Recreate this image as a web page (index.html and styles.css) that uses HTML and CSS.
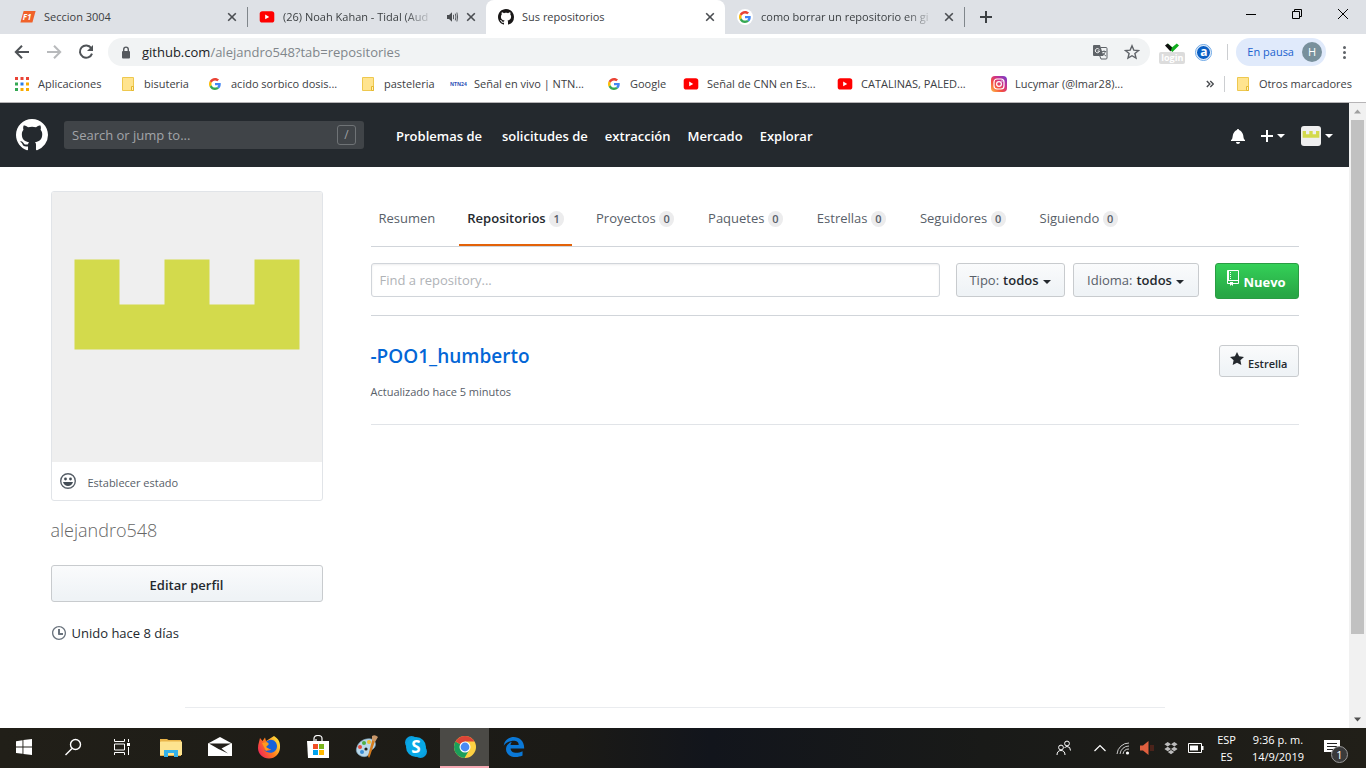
FILE: index.html
```html
<!DOCTYPE html>
<html lang="es">
<head>
<meta charset="utf-8">
<title>Sus repositorios</title>
<link rel="stylesheet" href="styles.css">
</head>
<body>
<svg class="sprite" aria-hidden="true">
  <symbol id="google" viewBox="0 0 48 48">
    <path fill="#ea4335" d="M24 9.5c3.54 0 6.71 1.22 9.21 3.6l6.85-6.85C35.9 2.38 30.47 0 24 0 14.62 0 6.51 5.38 2.56 13.22l7.98 6.19C12.43 13.72 17.74 9.5 24 9.5z"/>
    <path fill="#4285f4" d="M46.98 24.55c0-1.57-.15-3.09-.38-4.55H24v9.02h12.94c-.58 2.96-2.26 5.48-4.78 7.18l7.73 6c4.51-4.18 7.09-10.36 7.09-17.65z"/>
    <path fill="#fbbc05" d="M10.53 28.59c-.48-1.45-.76-2.99-.76-4.59s.27-3.14.76-4.59l-7.98-6.19C.92 16.46 0 20.12 0 24c0 3.88.92 7.54 2.56 10.78l7.97-6.19z"/>
    <path fill="#34a853" d="M24 48c6.48 0 11.93-2.13 15.89-5.81l-7.73-6c-2.15 1.45-4.92 2.3-8.16 2.3-6.26 0-11.57-4.22-13.47-9.91l-7.98 6.19C6.51 42.62 14.62 48 24 48z"/>
  </symbol>
  <symbol id="youtube" viewBox="0 0 16 16"><rect x="0.7" y="2.2" width="14.6" height="11.4" rx="2.6" fill="#f00"/><path d="M6.2 5.6v4.6L10.2 7.9z" fill="#fff"/></symbol>
  <symbol id="folder" viewBox="0 0 14 16"><path d="M1.5 1.5h11v9.5v3.5h-11z" fill="#ffe48f" stroke="#eec84f"/><path d="M10.5 14.5v-4h2v4z" fill="#fff0b8" stroke="#e5b930"/></symbol>
  <symbol id="github" viewBox="0 0 16 16"><path d="M8 0C3.58 0 0 3.58 0 8c0 3.54 2.29 6.53 5.47 7.59.4.07.55-.17.55-.38 0-.19-.01-.82-.01-1.49-2.01.37-2.53-.49-2.69-.94-.09-.23-.48-.94-.82-1.13-.28-.15-.68-.52-.01-.53.63-.01 1.08.58 1.23.82.72 1.21 1.87.87 2.33.66.07-.52.28-.87.51-1.07-1.78-.2-3.64-.89-3.64-3.95 0-.87.31-1.59.82-2.15-.08-.2-.36-1.02.08-2.12 0 0 .67-.21 2.2.82.64-.18 1.32-.27 2-.27.68 0 1.36.09 2 .27 1.53-1.04 2.2-.82 2.2-.82.44 1.1.16 1.92.08 2.12.51.56.82 1.27.82 2.15 0 3.07-1.87 3.75-3.65 3.95.29.25.54.73.54 1.48 0 1.07-.01 1.93-.01 2.2 0 .21.15.46.55.38A8.013 8.013 0 0016 8c0-4.42-3.58-8-8-8z" fill="currentColor"/></symbol>
  <symbol id="close" viewBox="0 0 10 10"><path d="M1.2 1.2l7.6 7.6M8.8 1.2L1.2 8.8" stroke="#4a4d51" stroke-width="1.6"/></symbol>
  <symbol id="crown" viewBox="0 0 420 420"><rect width="420" height="420" fill="#efefef"/><path d="M35 105h70v70h70v-70h70v70h70v-70h70v140H35z" fill="#d3da4c"/></symbol>
</svg>

<header class="browser">
  <div class="tab-strip">
    <div class="tab">
      <svg class="icon16" viewBox="0 0 16 16"><path d="M3.6 2h12L12.4 13.6H.4z" fill="#f0622a"/><text x="2.8" y="10.8" class="f1-mark">F1</text></svg>
      <span class="tab-title">Seccion 3004</span>
      <button class="tab-close" aria-label="Cerrar"><svg><use href="#close"/></svg></button>
    </div>
    <div class="tab tab-divided">
      <svg class="icon16"><use href="#youtube"/></svg>
      <span class="tab-title"><span class="fade">(26) Noah Kahan - Tidal (Aud</span></span>
      <svg class="speaker" viewBox="0 0 12 12"><path d="M1 4h2l3-2.8v9.6L3 8H1z" fill="#4a4d51"/><path d="M7.5 3.8v4.4M9.3 2.6q1.2 3.4 0 6.8M10.9 1.5q1.4 4.5 0 9" stroke="#4a4d51" fill="none" stroke-width=".9"/></svg>
      <button class="tab-close" aria-label="Cerrar"><svg><use href="#close"/></svg></button>
    </div>
    <div class="tab active">
      <svg class="icon16 dark"><use href="#github"/></svg>
      <span class="tab-title">Sus repositorios</span>
      <button class="tab-close" aria-label="Cerrar"><svg><use href="#close"/></svg></button>
    </div>
    <div class="tab">
      <span class="round"><svg><use href="#google"/></svg></span>
      <span class="tab-title"><span class="fade">como borrar un repositorio en gi</span></span>
      <button class="tab-close" aria-label="Cerrar"><svg><use href="#close"/></svg></button>
    </div>
    <button class="new-tab tab-divided" aria-label="Nueva pestaña"><svg viewBox="0 0 12 12"><path d="M6 0v12M0 6h12" stroke="#3c4043" stroke-width="2"/></svg></button>
    <div class="window-buttons">
      <button aria-label="Minimizar"><svg viewBox="0 0 12 12"><path d="M1 6.5h10" stroke="#000"/></svg></button>
      <button aria-label="Restaurar"><svg viewBox="0 0 12 12"><path d="M1.5 3.5h7v7h-7zM3.5 3.5v-2h7v7h-2" fill="none" stroke="#000"/></svg></button>
      <button aria-label="Cerrar ventana"><svg viewBox="0 0 12 12"><path d="M1 1l10 10M11 1L1 11" stroke="#000"/></svg></button>
    </div>
  </div>

  <div class="toolbar">
    <button aria-label="Atrás"><svg viewBox="0 0 16 16"><path d="M15 8H2.5M8 1.8L1.8 8 8 14.2" stroke="#4f5357" stroke-width="2" fill="none"/></svg></button>
    <button aria-label="Adelante"><svg viewBox="0 0 16 16"><path d="M1 8h12.5M8 1.8L14.2 8 8 14.2" stroke="#b8babc" stroke-width="2" fill="none"/></svg></button>
    <button aria-label="Recargar"><svg viewBox="0 0 16 16"><path d="M13.2 4A6.2 6.2 0 1 0 14 9.6" stroke="#4f5357" stroke-width="2" fill="none"/><path d="M15 1v6H9z" fill="#4f5357"/></svg></button>
    <div class="omnibox">
      <svg class="lock" viewBox="0 0 10 13"><rect x="1" y="5" width="8" height="7.5" rx="1" fill="#55595e"/><path d="M2.7 5.5V3.4a2.3 2.3 0 0 1 4.6 0v2.1" fill="none" stroke="#55595e" stroke-width="1.4"/></svg>
      <a class="url" href="#">github.com<span>/alejandro548?tab=repositories</span></a>
      <svg class="icon16" viewBox="0 0 16 16"><path d="M2 1h6l3.5 11H2a1 1 0 0 1-1-1V2a1 1 0 0 1 1-1z" fill="#5f6368"/><path d="M7.2 5.5A2.1 2.1 0 1 0 7.5 7H5.6" stroke="#fff" fill="none"/><path d="M8.5 3.5H14a1 1 0 0 1 1 1V14a1 1 0 0 1-1 1H9l-1.2-3" fill="none" stroke="#5f6368"/><path d="M9.8 7.5h4.4M12 6.3v1.2M13.4 7.5q-.5 2.5-3 4M11 9q1 2 3 3" stroke="#5f6368" fill="none" stroke-width=".9"/></svg>
      <svg class="icon16 star" viewBox="0 0 16 16"><path d="M8 1.8l1.8 4.3 4.7.4-3.6 3 1.1 4.6L8 11.7l-4 2.4 1.1-4.6-3.6-3 4.7-.4z" fill="none" stroke="#5f6368" stroke-width="1.4"/></svg>
    </div>
    <div class="extension"><svg viewBox="0 0 16 9"><path d="M2.2 3L4 .6l4.2 3.6L12.800 .5 15 2.600 8.400 9z" fill="#0fae1d"/><path d="M1 2.500L3.600 .5 8 4.400 6.500 8.500z" fill="#111"/></svg><span>login</span></div>
    <span class="ext-a">a</span>
    <button class="profile">En pausa <span>H</span></button>
    <button class="kebab" aria-label="Menú"><i></i><i></i><i></i></button>
  </div>

  <nav class="bookmarks">
    <a href="#"><svg class="icon16" viewBox="0 0 16 16"><path fill="#ea4335" d="M1 1h3v3H1zM6.500 1h3v3h-3zM12 1h3v3h-3z"/><path fill="#34a853" d="M1 6.500h3v3H1zM1 12h3v3H1z"/><path fill="#2a7de8" d="M6.500 6.500h3v3h-3z"/><path fill="#f9ab00" d="M12 6.500h3v3h-3zM6.500 12h3v3h-3zM12 12h3v3h-3z"/></svg>Aplicaciones</a>
    <a href="#"><svg class="icon16"><use href="#folder"/></svg>bisuteria</a>
    <a href="#"><svg class="icon16 g12"><use href="#google"/></svg>acido sorbico dosis...</a>
    <a href="#"><svg class="icon16"><use href="#folder"/></svg>pasteleria</a>
    <a href="#"><span class="ntn">NTN24</span>Señal en vivo | NTN...</a>
    <a href="#"><svg class="icon16 g12"><use href="#google"/></svg>Google</a>
    <a href="#"><svg class="icon16"><use href="#youtube"/></svg>Señal de CNN en Es...</a>
    <a href="#"><svg class="icon16"><use href="#youtube"/></svg>CATALINAS, PALED...</a>
    <a href="#"><svg class="icon16" viewBox="0 0 16 16"><defs><linearGradient id="ig" x1="0" y1="1" x2="1" y2="0"><stop offset="0" stop-color="#fdc04a"/><stop offset=".35" stop-color="#f5503f"/><stop offset=".65" stop-color="#c8308f"/><stop offset="1" stop-color="#6a3fd0"/></linearGradient></defs><rect width="16" height="16" rx="4" fill="url(#ig)"/><rect x="3" y="3" width="10" height="10" rx="3" fill="none" stroke="#fff" stroke-width="1.200"/><circle cx="8" cy="8" r="2.400" fill="none" stroke="#fff" stroke-width="1.200"/><circle cx="11" cy="5" r=".7" fill="#fff"/></svg>Lucymar (@lmar28)...</a>
    <button class="more" aria-label="Más marcadores"><svg viewBox="0 0 8 8"><path d="M.8 1l3 3-3 3M4.300 1l3 3-3 3" stroke="#4a4d51" stroke-width="1.400" fill="none"/></svg></button>
    <a class="others" href="#"><svg class="icon16"><use href="#folder"/></svg>Otros marcadores</a>
  </nav>
</header>

<div class="viewport">
  <div class="page">
    <header class="gh-header">
      <a class="gh-logo" href="#" aria-label="GitHub"><svg><use href="#github"/></svg></a>
      <label class="gh-search"><input type="text" aria-label="Buscar" placeholder="Search or jump to..."><kbd>/</kbd></label>
      <nav class="gh-nav">
        <a class="issues" href="#">Problemas de</a>
        <a href="#">solicitudes de</a>
        <a href="#">extracción</a>
        <a href="#">Mercado</a>
        <a href="#">Explorar</a>
      </nav>
      <div class="gh-tools">
        <button aria-label="Notificaciones"><svg class="oct14" viewBox="0 0 14 16"><path fill="currentColor" d="M14 12v1H0v-1l.73-.58c.77-.77.81-2.550 1.190-4.420C2.690 3.230 6 2 6 2c0-.55.45-1 1-1s1 .45 1 1c0 0 3.390 1.230 4.160 5 .38 1.880.42 3.660 1.190 4.420l.66.58H14zm-7 4c1.110 0 2-.89 2-2H5c0 1.110.89 2 2 2z"/></svg></button>
        <button aria-label="Crear"><svg class="oct12" viewBox="0 0 12 16"><path fill="currentColor" d="M12 9H7v5H5V9H0V7h5V2h2v5h5v2z"/></svg><i class="caret"></i></button>
        <button aria-label="Cuenta"><svg class="mini-avatar"><use href="#crown"/></svg><i class="caret"></i></button>
      </div>
    </header>

    <div class="container">
      <aside class="sidebar">
        <div class="avatar-card">
          <svg class="avatar" viewBox="0 0 420 420"><use href="#crown"/></svg>
          <button class="status"><svg class="icon16" viewBox="0 0 16 16"><circle cx="8" cy="8" r="7.300" fill="none" stroke="#586069" stroke-width="1.400"/><circle cx="5.500" cy="6" r="1.400" fill="#444d56"/><circle cx="10.500" cy="6" r="1.400" fill="#444d56"/><path d="M3 9h10c-.8 2.700-2.600 4-5 4s-4.200-1.300-5-4z" fill="#444d56"/></svg><span>Establecer estado</span></button>
        </div>
        <h1 class="username">alejandro548</h1>
        <button class="btn edit">Editar perfil</button>
        <p class="joined"><svg class="oct14" viewBox="0 0 14 16"><path fill="#6a737d" d="M8 8h3v2H7c-.55 0-1-.45-1-1V4h2v4zM7 2.300c3.140 0 5.700 2.560 5.700 5.700s-2.560 5.700-5.700 5.700A5.710 5.710 0 011.300 8c0-3.140 2.560-5.700 5.700-5.700zM7 1C3.140 1 0 4.140 0 8s3.140 7 7 7 7-3.140 7-7-3.140-7-7-7z"/></svg>Unido hace 8 días</p>
      </aside>

      <main class="main">
        <nav class="subnav">
          <a href="#">Resumen</a>
          <a class="selected" href="#">Repositorios <span>1</span></a>
          <a href="#">Proyectos <span>0</span></a>
          <a href="#">Paquetes <span>0</span></a>
          <a href="#">Estrellas <span>0</span></a>
          <a href="#">Seguidores <span>0</span></a>
          <a href="#">Siguiendo <span>0</span></a>
        </nav>
        <form class="filters">
          <input type="search" aria-label="Buscar repositorio" placeholder="Find a repository...">
          <button type="button" class="btn type"><span>Tipo:</span> todos<i class="caret"></i></button>
          <button type="button" class="btn lang"><span>Idioma:</span> todos<i class="caret"></i></button>
          <button type="button" class="btn primary"><svg class="oct12" viewBox="0 0 12 16"><path fill="currentColor" d="M4 9H3V8h1v1zm0-3H3v1h1V6zm0-2H3v1h1V4zm0-2H3v1h1V2zm8-1v12c0 .55-.45 1-1 1H6v2l-1.500-1.500L3 16v-2H1c-.55 0-1-.45-1-1V1c0-.55.45-1 1-1h10c.55 0 1 .45 1 1zm-1 10H1v2h2v-1h3v1h5v-2zm0-10H2v9h9V1z"/></svg><span>Nuevo</span></button>
        </form>
        <article class="repo">
          <div>
            <h3><a href="#">-POO1_humberto</a></h3>
            <p>Actualizado hace 5 minutos</p>
          </div>
          <button class="btn star-btn"><svg class="oct14" viewBox="0 0 14 16"><path fill="currentColor" d="M14 6l-4.900-.64L7 1 4.900 5.360 0 6l3.600 3.260L2.670 14 7 11.670 11.330 14l-.93-4.740L14 6z"/></svg><span>Estrella</span></button>
        </article>
      </main>
    </div>
    <footer class="page-footer"></footer>
  </div>
  <div class="scrollbar" aria-hidden="true">
    <svg viewBox="0 0 17 17"><path d="M5 10.500h7L8.500 6.500z" fill="#a0a0a0"/></svg>
    <div class="thumb"></div>
    <div class="rest"></div>
    <svg viewBox="0 0 17 17"><path d="M5 6.500h7L8.500 10.500z" fill="#505050"/></svg>
  </div>
</div>

<footer class="taskbar">
  <div class="apps">
    <button aria-label="Inicio"><svg viewBox="0 0 24 24"><path fill="#fff" d="M4 6.300l6.500-1v6.300H4zM11.400 5.100L20 4v7.600h-8.600zM4 12.500h6.500v6.300L4 17.900zM11.400 12.500H20V20l-8.600-1.100z"/></svg></button>
    <button aria-label="Buscar"><svg viewBox="0 0 24 24"><circle cx="14.500" cy="9.500" r="5" fill="none" stroke="#fff" stroke-width="1.400"/><path d="M11 13.500L4.500 20" stroke="#fff" stroke-width="1.500"/></svg></button>
    <button aria-label="Vista de tareas"><svg viewBox="0 0 24 24"><path d="M4.500 4v2.500h10V4M4.500 20v-2.500h10V20M4.500 9v6h10V9zM18.500 4v3M18.500 12v8" stroke="#fff" fill="none"/><path d="M17 8h3v3h-3z" fill="#fff"/></svg></button>
    <button aria-label="Explorador"><svg viewBox="0 0 24 24"><path d="M1 4h7l1.500 1H22v16H1z" fill="#e9b449"/><path d="M2 6.500h21V20H1V7z" fill="#fde38f"/><path d="M5 22v-7h14v7h-4v-4H9v4z" fill="#34b1e8"/></svg></button>
    <button aria-label="Correo"><svg viewBox="0 0 24 24"><path d="M0 8.500L12 2l12 6.500V21H0z" fill="#fff"/><path d="M1 8.500h22l-9.500 5L20 18.500 10.500 14z" fill="#24211b"/></svg></button>
    <button aria-label="Firefox"><svg viewBox="0 0 24 24"><defs><linearGradient id="fx" x1="0" y1=".8" x2="1" y2=".2"><stop offset="0" stop-color="#f0205c"/><stop offset=".5" stop-color="#ff7b1c"/><stop offset="1" stop-color="#ffe83c"/></linearGradient></defs><path d="M2 7l1-4 2.500 3L8 2.500 9 6l8-5c5 3 6.500 7 6 12-.5 6-5 10.500-11 10.500S1 19 1 13c0-2 .3-4 1-6z" fill="url(#fx)"/><path d="M9 7c5-5 11-1 11 4 0 7-8 9-13 4 3 1 6 1 7-1-4 0-7-2-5-7z" fill="#1762d9"/><path d="M5 8l5-1 2 2-3 3 3 2-3 2z" fill="#ff9b1f"/></svg></button>
    <button aria-label="Tienda"><svg viewBox="0 0 24 24"><path d="M8 6V3.500C8 1.500 9.500.5 12 .5s4 1 4 3V6M10 6V4" fill="none" stroke="#fff" stroke-width="1.200"/><path d="M1 6h22v17H2z" fill="#fff"/><path d="M7 9h5v5H7z" fill="#f04e23"/><path d="M13 9h5v5h-5z" fill="#79b51c"/><path d="M7 15h5v5H7z" fill="#00a2ed"/><path d="M13 15h5v5h-5z" fill="#ffb800"/></svg></button>
    <button aria-label="Paint"><svg viewBox="0 0 24 24"><path d="M2 12C4 6 10 3 16 4c5 1 6 7 2 10-3 1-3 3-4 5-2 4-8 3-11 0-2-2-2-5-1-7z" fill="#b9d8ea" stroke="#7fa6bd" stroke-width=".7"/><circle cx="5" cy="12" r="2" fill="#e34b3c"/><circle cx="9" cy="8" r="2" fill="#4fae45"/><circle cx="14" cy="7" r="2" fill="#efbf35"/><circle cx="7" cy="17" r="2" fill="#3c8ed6"/><circle cx="11" cy="14" r="1.600" fill="#24211b"/><path d="M21 3L15 21l-1 2-1-2 5-19z" fill="#d57b1d"/><path d="M17 1q3-2 6 1l-3 5-3-2z" fill="#c9986a"/></svg></button>
    <button aria-label="Skype"><svg viewBox="0 0 24 24"><circle cx="7.500" cy="7.500" r="6.500" fill="#0a9fe0"/><circle cx="16.500" cy="16.500" r="6.500" fill="#0a9fe0"/><circle cx="12" cy="12" r="10" fill="#08a8e6"/><text x="12" y="18" text-anchor="middle" class="skype-mark">S</text></svg></button>
    <button class="running" aria-label="Chrome"><svg viewBox="0 0 24 24"><circle cx="12" cy="12" r="11" fill="#fdd042"/><path d="M2.500 6.500A11 11 0 0 0 11.500 23l5-8.500L12 12z" fill="#1b9e5a"/><path d="M12 12L2.500 6.500A11 11 0 0 1 21.500 6.500H12z" fill="#dc4437"/><circle cx="12" cy="12" r="5.500" fill="#fff"/><circle cx="12" cy="12" r="4.400" fill="#4a8af4"/></svg></button>
    <button aria-label="Edge"><svg viewBox="0 0 24 24"><path fill="#0a78d7" d="M1.740 10.810C2.830-1.360 22.500-1.360 22.200 13.560H8.610c0 4.290 5.810 5.650 11.930 2.750v4.220C13.250 23.880 4 21.430 4 14.090c0-5.510 5.970-7.280 5.970-7.280S8.580 8.580 8.540 10.050H16.700C16.700 2.930 4.900 5.570 1.740 10.810z"/></svg></button>
  </div>
  <div class="tray">
    <svg class="people" viewBox="0 0 16 16"><circle cx="11" cy="3.500" r="2.400" fill="none" stroke="#fff"/><circle cx="5" cy="7.500" r="2.400" fill="none" stroke="#fff"/><path d="M1 15c0-3 1.500-4.500 4-4.500S9 12 9 15M8.500 8Q9.500 6.500 11 6.500q3.500 0 3.500 4" fill="none" stroke="#fff"/></svg>
    <svg class="up" viewBox="0 0 12 12"><path d="M.5 9L6 3.500 11.500 9" fill="none" stroke="#fff" stroke-width="1.200"/></svg>
    <svg viewBox="0 0 14 14"><path d="M1 13A12 12 0 0 1 13 2M4 13a9 9 0 0 1 9-8M7 13a6 6 0 0 1 6-5" fill="none" stroke="#ccc"/><circle cx="11.500" cy="12" r="1.600" fill="#fff"/></svg>
    <svg viewBox="0 0 14 14"><path d="M0 4.500h3L8.500 0v14L3 9.500H0z" fill="#e0603f"/><path d="M11 4v6M13 4v6" stroke="#7a2b1d"/></svg>
    <svg viewBox="0 0 14 14"><path fill="#bbb" d="M3.700 1L7 3.200 3.700 5.400.4 3.200zM10.300 1l3.300 2.200-3.300 2.200L7 3.200zM3.700 5.800L7 8l-3.300 2.200L.4 8zM10.300 5.800L13.600 8l-3.300 2.200L7 8zM7 9l3.200 2L7 13.200 3.800 11z"/></svg>
    <svg class="battery" viewBox="0 0 16 10"><path d="M.5.5h13v9H.5z" fill="none" stroke="#fff"/><path d="M2 2.500h8v5H2zM14 3h1.500v4H14z" fill="#fff"/></svg>
    <div class="tray-text lang-code"><span>ESP</span><span>ES</span></div>
    <div class="tray-text"><span>9:36 p. m.</span><span>14/9/2019</span></div>
    <button class="notices" aria-label="Notificaciones"><svg viewBox="0 0 16 16"><path d="M0 0h16v12h-5v4l-4-4H0z" fill="#fff"/><path d="M3 3.500h10M3 6.500h10M3 9.500h7" stroke="#222"/></svg><span>1</span></button>
  </div>
</footer>
</body>
</html>
```

FILE: styles.css
```css
* { box-sizing: border-box; }

body {
  margin: 0;
  height: 100vh;
  display: flex;
  flex-direction: column;
  overflow: hidden;
  background: #fff;
  color: #24292e;
  font-family: "Open Sans", "Noto Sans", sans-serif;
  font-size: 13px;
  line-height: 20px;
}

button {
  font: inherit;
  color: inherit;
  border: 0;
  padding: 0;
  background: none;
}

a { color: inherit; text-decoration: none; }
svg { display: block; flex: none; }
.sprite { position: absolute; width: 0; height: 0; }
.icon16 { width: 16px; height: 16px; }
.oct14 { width: 14px; height: 16px; }
.oct12 { width: 12px; height: 16px; }

.caret {
  display: inline-block;
  border: 4px solid transparent;
  border-top-color: currentColor;
  border-bottom: 0;
}

/* Browser tabs */
.browser { flex: none; font-size: 11px; border-bottom: 1px solid #b6b4b6; }

.tab-strip {
  display: flex;
  height: 34px;
  padding-left: 8px;
  background: #dee1e6;
}

.tab {
  flex: 0 1 239px;
  min-width: 0;
  display: flex;
  align-items: center;
  gap: 8px;
  padding: 0 10px 0 12px;
  color: #3c4043;
}

.tab.active { background: #fff; border-radius: 8px 8px 0 0; }

.tab-divided {
  background: linear-gradient(#80868b, #80868b) 0 7px / 1px 20px no-repeat;
}

.tab-title { flex: 1; min-width: 0; white-space: nowrap; }
.fade { display: inline-block; -webkit-mask-image: linear-gradient(90deg, #000 calc(100% - 24px), rgba(0, 0, 0, .2)); mask-image: linear-gradient(90deg, #000 calc(100% - 24px), rgba(0, 0, 0, .2)); }
.tab-close svg { width: 10px; height: 10px; }
.speaker { width: 12px; height: 12px; }
.dark { color: #191717; }
.f1-mark { font: italic 700 8px "Open Sans", sans-serif; fill: #fff; }
.round { width: 16px; height: 16px; border-radius: 50%; background: #fff; padding: 2px; }
.round svg { width: 12px; height: 12px; }
.new-tab { padding: 0 16px; }
.new-tab svg { width: 12px; height: 12px; }
.window-buttons { margin-left: auto; display: flex; align-items: flex-start; padding: 8px 17px; gap: 34px; }
.window-buttons svg { width: 12px; height: 12px; }

/* Address bar */
.toolbar { display: flex; align-items: center; height: 36px; padding: 0 14px; }
.toolbar > button > svg { width: 16px; height: 16px; margin-right: 16px; }

.omnibox {
  flex: 1;
  height: 28px;
  display: flex;
  align-items: center;
  gap: 16px;
  margin-left: -2px;
  padding: 0 10px 0 13px;
  border-radius: 14px;
  background: #f1f3f4;
}

.lock { width: 10px; height: 13px; margin-right: -5px; }
.url { flex: 1; font-size: 13px; color: #202124; }
.url span { color: #80868b; }
.extension { width: 26px; margin-left: 9px; display: flex; flex-direction: column; align-items: center; padding-top: 3px; }
.extension svg { width: 16px; height: 9px; }
.extension span { width: 26px; background: #dcdcdc; border-radius: 2px; color: #fff; font-size: 9px; font-weight: 700; line-height: 12px; text-align: center; }

.ext-a {
  width: 15px;
  height: 15px;
  margin: 0 17px 0 11px;
  border-radius: 50%;
  border: 1px solid #fff;
  outline: 1px solid #6aa6e6;
  background: #0a5fc4;
  color: #fff;
  font-size: 12px;
  font-weight: 700;
  line-height: 11px;
  text-align: center;
}

.profile {
  height: 28px;
  display: flex;
  align-items: center;
  gap: 8px;
  margin-left: 8px;
  padding: 0 4px 0 11px;
  border-radius: 14px;
  background: #e0eafb;
  color: #1a62cf;
  white-space: nowrap;
  position: relative;
}

.profile::before {
  content: "";
  position: absolute;
  left: -9px;
  top: 6px;
  width: 1px;
  height: 16px;
  background: #ccced1;
}

.profile span { width: 20px; border-radius: 50%; background: #78909c; color: #fff; text-align: center; }
.kebab { display: grid; gap: 2px; margin-left: 17px; margin-right: 6px; }
.kebab i { width: 3px; height: 3px; border-radius: 50%; background: #5f6368; }

/* Bookmarks */
.bookmarks {
  display: grid;
  grid-template-columns: 106px 87px 153px 90px 156px 77px 154px 154px 1fr auto auto;
  align-items: center;
  height: 32px;
  padding: 0 14px 4px;
  color: #3c4043;
  white-space: nowrap;
}

.bookmarks a { display: flex; align-items: center; gap: 8px; }
.g12 { padding: 2px; }
.ntn { width: 16px; color: #2b4fb5; font-size: 5px; font-weight: 700; }
.more { padding: 0 10px; border-right: 1px solid #ccced1; height: 16px; }
.more svg { width: 8px; height: 8px; }
.others { padding-left: 10px; }

/* Page and scrollbar */
.viewport { flex: 1; min-height: 0; display: flex; }
.page { flex: 1; min-width: 0; overflow: hidden; }
.scrollbar { width: 17px; display: flex; flex-direction: column; background: #f1f1f1; }
.scrollbar svg { width: 17px; height: 17px; }
.thumb { flex: 514; margin: 0 2px; background: #c1c1c1; }
.rest { flex: 77; }

/* GitHub header */
.gh-header {
  display: flex;
  align-items: center;
  height: 64px;
  padding: 0 16px;
  background: #24292e;
  color: #fff;
}

.gh-logo svg { width: 32px; height: 32px; }

.gh-search {
  width: 300px;
  height: 28px;
  margin-left: 16px;
  padding-right: 8px;
  display: flex;
  align-items: center;
  border-radius: 3px;
  background: #404448;
}

.gh-search input { flex: 1; min-width: 0; border: 0; padding: 0 8px; background: none; color: #fff; font: inherit; outline: 0; }
.gh-search input::placeholder { color: #a3a5a8; }
.gh-search kbd { width: 19px; height: 20px; border: 1px solid #6f7376; border-radius: 3px; color: #9da0a3; font: inherit; font-size: 12px; line-height: 18px; text-align: center; }
.gh-nav { display: flex; gap: 17px; margin-left: 32px; padding-top: 2px; font-weight: 600; }
.issues { margin-right: 3px; }
.gh-tools { display: flex; align-items: center; gap: 16px; margin-left: auto; padding-top: 2px; }
.gh-tools button { display: flex; align-items: center; gap: 4px; }
.mini-avatar { width: 20px; height: 20px; border-radius: 3px; }

/* Profile layout */
.container {
  display: grid;
  grid-template-columns: 272px minmax(0, 1fr);
  gap: 48px;
  max-width: 1280px;
  margin: 24px auto 0;
  padding: 0 16px;
}

.avatar-card { border: 1px solid #e1e4e8; border-radius: 3px; overflow: hidden; }
.avatar { width: 100%; height: auto; }
.status { display: flex; align-items: center; gap: 12px; width: 100%; height: 38px; padding: 0 8px; font-size: 11px; color: #586069; }
.status span { padding-top: 3px; }
.username { margin: 16px 0 0; font-size: 18px; line-height: 26px; font-weight: 300; color: #666; }

.btn {
  display: flex;
  align-items: center;
  justify-content: center;
  height: 34px;
  padding: 0 12px;
  border: 1px solid #c8cbce;
  border-radius: 3px;
  background: linear-gradient(#fafbfc, #eff3f6 90%);
  font-weight: 600;
  white-space: nowrap;
}

.edit { width: 100%; height: 37px; margin-top: 22px; padding-top: 3px; }
.joined { display: flex; align-items: center; gap: 6px; margin: 21px 0 0; padding-left: 1px; }

.subnav { display: flex; gap: 16px; height: 56px; border-bottom: 1px solid #d1d5da; color: #586069; }
.subnav a { padding: 17px 8px 0; white-space: nowrap; }
.subnav .selected { color: #24292e; font-weight: 600; border-bottom: 2px solid #e36209; }
.subnav .selected ~ a { padding-right: 10px; }
.subnav span { display: inline-block; min-width: 15px; padding: 0 4px; border-radius: 8px; background: #ececed; color: #586069; font-size: 11px; font-weight: 600; line-height: 16px; text-align: center; }

.filters { display: flex; align-items: flex-start; gap: 8px; padding: 16px 0; border-bottom: 1px solid #d1d5da; }

.filters input {
  flex: 1;
  min-width: 0;
  height: 34px;
  margin-right: 8px;
  padding: 0 8px;
  border: 1px solid #d1d5da;
  border-radius: 3px;
  box-shadow: inset 0 1px 2px rgba(27, 31, 35, .08);
  font: inherit;
}

.filters input::placeholder { color: #b0b3b7; }
.filters .btn { gap: 4px; }
.filters .btn > span { color: #586069; font-weight: 400; }
.filters .caret { margin-top: 3px; }
.type { width: 109px; }
.lang { width: 126px; margin-right: 8px; }

.filters .primary {
  width: 84px;
  height: 36px;
  border-color: #2a9c43;
  background: linear-gradient(#34d058, #28a745 90%);
  color: #fff;
}

.primary svg { align-self: flex-start; margin-top: 6px; }
.filters .primary > span { color: #fff; font-weight: 700; padding-top: 2px; }

.repo { display: flex; justify-content: space-between; align-items: flex-start; padding: 29px 0 22px; border-bottom: 1px solid #e1e4e8; }
.repo h3 { margin: -3px 0 0; font-size: 19px; line-height: 28px; font-weight: 600; color: #0366d6; }
.repo p { margin: 12px 0 0; font-size: 11px; color: #586069; }
.star-btn { height: 32px; padding: 0 10px; gap: 4px; font-size: 11px; }
.star-btn svg { align-self: flex-start; margin-top: 5px; }
.star-btn span { padding-top: 5px; }

.page-footer { max-width: 980px; margin: 64px auto 0; border-top: 1px solid #eaecef; }

/* Taskbar */
.taskbar {
  flex: none;
  display: flex;
  justify-content: space-between;
  height: 40px;
  background: linear-gradient(90deg, #211f18 0%, #1b1a16 42%, #12151c 52%, #191a18 72%, #211f18 100%);
  color: #fff;
}

.apps { display: flex; }
.apps button { width: 49px; display: grid; place-items: center; border-bottom: 2px solid transparent; }
.apps button:first-child { width: 48px; }
.apps svg { width: 24px; height: 24px; }
.apps .running { background: #4b4a46; border-color: #f5a9b3; }
.skype-mark { font: 700 17px "Open Sans", sans-serif; fill: #fff; }
.tray { display: flex; align-items: center; gap: 10px; padding-right: 16px; }
.tray svg { width: 14px; height: 14px; }
.tray .people { width: 16px; height: 16px; margin-right: 12px; }
.tray .up { width: 12px; height: 12px; }
.tray .battery { width: 16px; height: 10px; }
.tray-text { display: flex; flex-direction: column; align-items: center; font-size: 11px; line-height: 17px; }
.lang-code { margin: 0 6px 0 3px; }
.notices { position: relative; padding: 0 10px; }
.tray .notices svg { width: 16px; height: 16px; }
.notices span { position: absolute; left: 17px; top: 6px; width: 17px; height: 17px; border: 1px solid #999; border-radius: 50%; background: #3a3a3a; font-size: 11px; line-height: 15px; text-align: center; }
```
